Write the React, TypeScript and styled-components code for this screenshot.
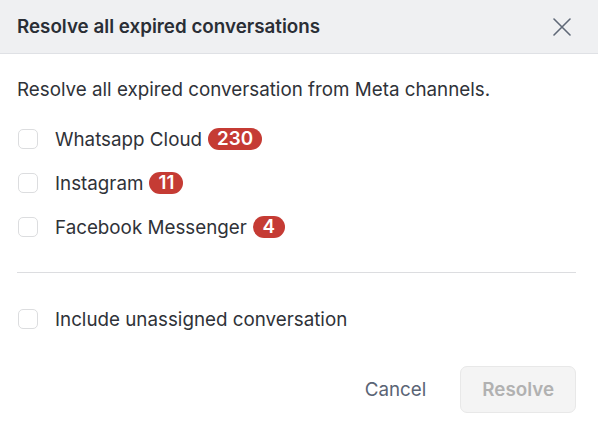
import * as React from 'react';
import styled, { createGlobalStyle } from 'styled-components';

const GlobalStyle = createGlobalStyle`
  body {
    margin: 0;
    background: #ffffff;
    font-family: Inter, "Noto Sans", sans-serif;
  }
`;

const Dialog = styled.div`
  width: 598px;
  height: 432px;
  background: #ffffff;
  display: flex;
  flex-direction: column;
`;

const Header = styled.div`
  height: 53px;
  display: flex;
  align-items: center;
  justify-content: space-between;
  padding: 0 26px 0 17px;
  background: #eff0f2;
  border-bottom: 1px solid #dfe1e5;
`;

const Title = styled.h2`
  margin: 0;
  font-size: 18.8px;
  font-weight: 600;
  color: #2a2e35;
`;

const CloseButton = styled.button`
  border: none;
  background: none;
  padding: 0;
  width: 20px;
  height: 20px;
  display: flex;
  align-items: center;
  justify-content: center;
  color: #5f6877;
  cursor: pointer;
`;

const Body = styled.div`
  padding: 24px 22px 0 17px;
  display: flex;
  flex-direction: column;
`;

const Description = styled.p`
  margin: 0;
  font-size: 18.8px;
  line-height: 24px;
  color: #2f3238;
`;

const OptionList = styled.div`
  margin-top: 25px;
  display: flex;
  flex-direction: column;
  gap: 20px;
`;

const Row = styled.label`
  display: flex;
  align-items: center;
  height: 24px;
  font-size: 18.8px;
  color: #2f3238;
  cursor: pointer;
`;

const Box = styled.span`
  width: 20px;
  height: 20px;
  margin-left: 1px;
  margin-right: 17px;
  border: 1px solid #dcdddf;
  border-radius: 5px;
  box-sizing: border-box;
  background: #ffffff;
  flex-shrink: 0;
`;

const Badge = styled.span`
  margin-left: 6px;
  height: 22px;
  padding: 0 9px;
  min-width: 14px;
  border-radius: 11px;
  background: #c53b34;
  color: #ffffff;
  font-size: 18.8px;
  font-weight: 600;
  line-height: 22px;
  text-align: center;
`;

const Divider = styled.hr`
  margin: 33px 0 0;
  border: none;
  border-top: 1px solid #dcdde0;
`;

const IncludeRow = styled(Row)`
  margin-top: 34px;
`;

const Footer = styled.div`
  margin-top: 35px;
  display: flex;
  justify-content: flex-end;
  gap: 12px;
`;

const Button = styled.button<{ $primary?: boolean }>`
  height: 47px;
  padding: 0 21px;
  border-radius: 7px;
  font-family: Inter, sans-serif;
  font-size: 18.8px;
  font-weight: ${p => (p.$primary ? 600 : 400)};
  color: ${p => (p.$primary ? '#b1b1b1' : '#5a6475')};
  background: ${p => (p.$primary ? '#f4f4f4' : 'transparent')};
  border: 1px solid ${p => (p.$primary ? '#e8e8e8' : 'transparent')};
`;

const channels = [
  { name: 'Whatsapp Cloud', count: 230 },
  { name: 'Instagram', count: 11 },
  { name: 'Facebook Messenger', count: 4 },
];

const App = () => {
  return (
    <Dialog>
      <GlobalStyle />
      <Header>
        <Title>Resolve all expired conversations</Title>
        <CloseButton aria-label="Close">
          <svg width="18" height="18" viewBox="0 0 18 18" fill="none" stroke="currentColor" strokeWidth="1.6" strokeLinecap="round">
            <path d="M1 1 L17 17 M17 1 L1 17" />
          </svg>
        </CloseButton>
      </Header>
      <Body>
        <Description>Resolve all expired conversation from Meta channels.</Description>
        <OptionList>
          {channels.map(c => (
            <Row key={c.name}>
              <Box />
              {c.name}
              <Badge>{c.count}</Badge>
            </Row>
          ))}
        </OptionList>
        <Divider />
        <IncludeRow>
          <Box />
          Include unassigned conversation
        </IncludeRow>
        <Footer>
          <Button>Cancel</Button>
          <Button $primary disabled>Resolve</Button>
        </Footer>
      </Body>
    </Dialog>
  );
};

export default App;
